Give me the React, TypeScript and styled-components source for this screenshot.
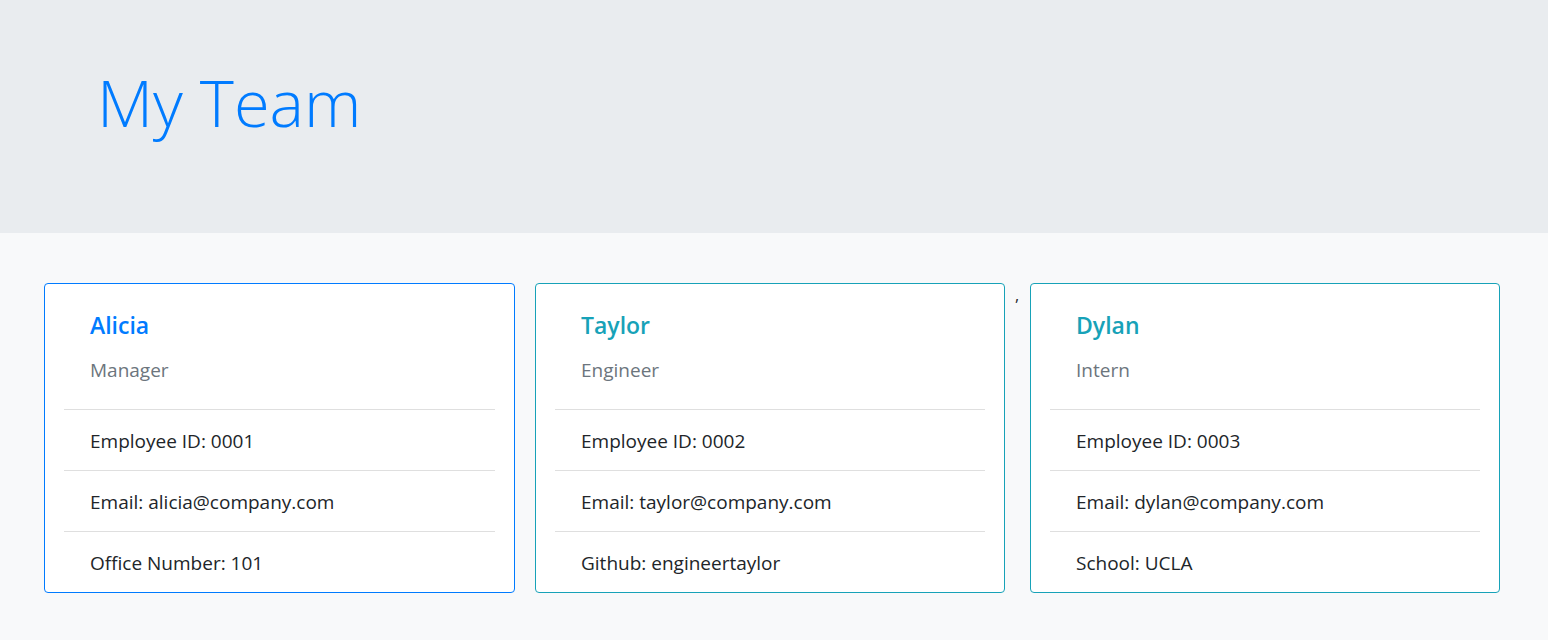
import React from "react";
import styled, { createGlobalStyle } from "styled-components";

const Global = createGlobalStyle`
  html, body {
    margin: 0;
    padding: 0;
    background: #f8f9fa;
    font-family: "Open Sans", "Noto Sans", sans-serif;
    color: #212529;
    font-size: 16px;
    line-height: 1.5;
  }
`;

const Jumbotron = styled.header`
  background: #e9ecef;
  height: 233px;
  box-sizing: border-box;
  padding: 63px 97px 0;
`;

const Heading = styled.h1`
  margin: 0;
  font-size: 65px;
  font-weight: 300;
  line-height: 1.2;
  color: #007bff;
`;

const CardsRow = styled.main`
  display: flex;
  align-items: flex-start;
  padding: 50px 34px 0;
`;

const Card = styled.section<{ $accent: string; $width: number }>`
  flex: 0 0 auto;
  width: ${(p) => p.$width}px;
  box-sizing: border-box;
  margin: 0 10px;
  background: #fff;
  border: 1px solid ${(p) => p.$accent};
  border-radius: 4px;
  padding: 0 19px;
`;

const CardHeader = styled.div`
  padding: 26px 26px 24px;
  border-bottom: 1px solid #dfdfdf;
`;

const Name = styled.h4<{ $accent: string }>`
  margin: 0 0 15px;
  font-size: 23px;
  font-weight: 600;
  line-height: 30px;
  color: ${(p) => p.$accent};
`;

const Role = styled.h6`
  margin: 0;
  font-size: 19px;
  font-weight: 400;
  line-height: 30px;
  color: #6c757d;
`;

const Item = styled.div`
  padding: 16px 26px 14px;
  font-size: 19px;
  line-height: 30px;
  border-bottom: 1px solid #dfdfdf;
  &:last-child {
    border-bottom: none;
  }
`;

const Comma = styled.span`
  flex: 0 0 5px;
  font-size: 16px;
  line-height: 24px;
  color: #212529;
`;

type Member = {
  name: string;
  role: string;
  id: string;
  email: string;
  extra: string;
  accent: string;
  width: number;
};

const members: Member[] = [
  { name: "Alicia", role: "Manager", id: "0001", email: "alicia@company.com", extra: "Office Number: 101", accent: "#007bff", width: 471 },
  { name: "Taylor", role: "Engineer", id: "0002", email: "taylor@company.com", extra: "Github: engineertaylor", accent: "#17a2b8", width: 470 },
  { name: "Dylan", role: "Intern", id: "0003", email: "dylan@company.com", extra: "School: UCLA", accent: "#17a2b8", width: 470 },
];

const MemberCard = ({ m }: { m: Member }) => (
  <Card $accent={m.accent} $width={m.width}>
    <CardHeader>
      <Name $accent={m.accent}>{m.name}</Name>
      <Role>{m.role}</Role>
    </CardHeader>
    <Item>Employee ID: {m.id}</Item>
    <Item>Email: {m.email}</Item>
    <Item>{m.extra}</Item>
  </Card>
);

export default function App() {
  return (
    <>
      <Global />
      <Jumbotron>
        <Heading>My Team</Heading>
      </Jumbotron>
      <CardsRow>
        <MemberCard m={members[0]} />
        <MemberCard m={members[1]} />
        <Comma>,</Comma>
        <MemberCard m={members[2]} />
      </CardsRow>
    </>
  );
}
